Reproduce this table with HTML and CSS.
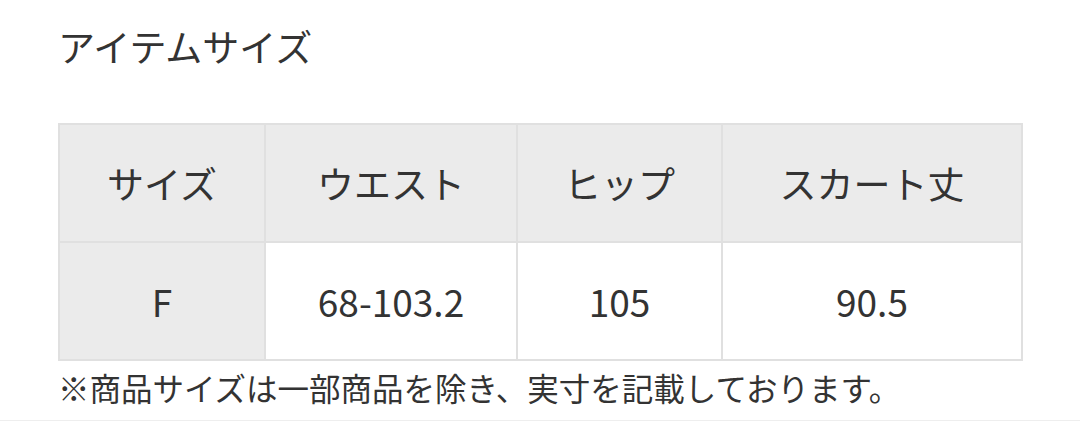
FILE: index.html
```html
<!DOCTYPE html>
<html lang="ja">
<head>
<meta charset="utf-8">
<link rel="stylesheet" href="styles.css">
</head>
<body>
<section class="size">
  <h2 class="size__title">アイテムサイズ</h2>
  <table class="size__table">
    <colgroup>
      <col class="c1"><col class="c2"><col class="c3"><col class="c4">
    </colgroup>
    <thead>
      <tr><th>サイズ</th><th>ウエスト</th><th>ヒップ</th><th>スカート丈</th></tr>
    </thead>
    <tbody>
      <tr><th>F</th><td>68-103.2</td><td>105</td><td>90.5</td></tr>
    </tbody>
  </table>
  <p class="size__note">※商品サイズは一部商品を除き、実寸を記載しております。</p>
</section>
</body>
</html>
```

FILE: styles.css
```css
html, body {
  margin: 0;
  padding: 0;
  background: #fff;
}
body {
  font-family: "Noto Sans CJK JP", "Noto Sans", sans-serif;
  color: #333;
  height: 424px;
  overflow: hidden;
}
.size {
  padding: 0 58px;
  border-bottom: 1px solid #eee;
  height: 421px;
  box-sizing: border-box;
}
.size__title {
  margin: 0;
  padding-top: 21px;
  font-size: 37px;
  font-weight: 400;
  line-height: 50px;
  height: 123px;
  box-sizing: border-box;
}
.size__table {
  width: 963px;
  border-collapse: collapse;
  table-layout: fixed;
  border: 2px solid #e0e0e0;
}
.c1 { width: 206px; }
.c2 { width: 252px; }
.c3 { width: 205px; }
.c4 { width: 300px; }
.size__table th,
.size__table td {
  border: 2px solid #e0e0e0;
  height: 116px;
  padding: 0;
  text-align: center;
  vertical-align: middle;
  font-size: 37px;
  font-weight: 400;
  line-height: 44px;
}
.size__table thead th {
  background: #ebebeb;
}
.size__table tbody th {
  background: #ebebeb;
}
.size__table td {
  background: #fff;
}
.size__note {
  margin: 0;
  padding-top: 4px;
  font-size: 31.5px;
  line-height: 44px;
}
```
